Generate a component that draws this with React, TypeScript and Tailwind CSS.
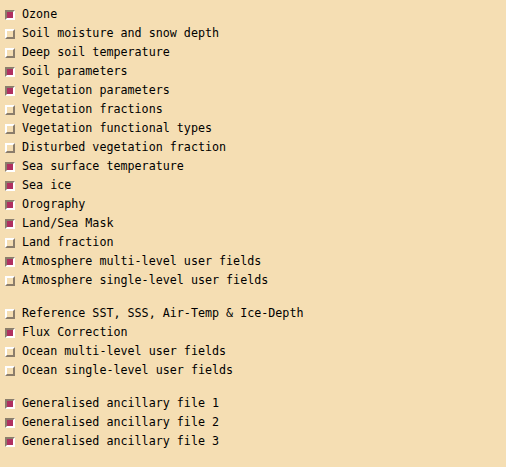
const groups: [string, boolean][][] = [
  [
    ["Ozone", true],
    ["Soil moisture and snow depth", false],
    ["Deep soil temperature", false],
    ["Soil parameters", true],
    ["Vegetation parameters", true],
    ["Vegetation fractions", false],
    ["Vegetation functional types", false],
    ["Disturbed vegetation fraction", false],
    ["Sea surface temperature", true],
    ["Sea ice", true],
    ["Orography", true],
    ["Land/Sea Mask", true],
    ["Land fraction", false],
    ["Atmosphere multi-level user fields", true],
    ["Atmosphere single-level user fields", false],
  ],
  [
    ["Reference SST, SSS, Air-Temp & Ice-Depth", false],
    ["Flux Correction", true],
    ["Ocean multi-level user fields", false],
    ["Ocean single-level user fields", false],
  ],
  [
    ["Generalised ancillary file 1", true],
    ["Generalised ancillary file 2", true],
    ["Generalised ancillary file 3", true],
  ],
];

function Check({ on }: { on: boolean }) {
  return on ? (
    <span className="w-[10px] h-[10px] border-2 border-t-[#8b7d6b] border-l-[#8b7d6b] border-r-white border-b-white bg-[#b03060] shrink-0" />
  ) : (
    <span className="w-[10px] h-[10px] border-2 border-t-white border-l-white border-r-[#8b7d6b] border-b-[#8b7d6b] bg-[#f5deb3] shrink-0" />
  );
}

export default function App() {
  return (
    <div
      className="w-[506px] h-[467px] bg-[#f5deb3] pt-[5px] flex flex-col gap-[14px] text-black"
      style={{ fontFamily: '"DejaVu Sans Mono", "Liberation Mono", monospace' }}
    >
      {groups.map((g, i) => (
        <div key={i} className="flex flex-col">
          {g.map(([label, on]) => (
            <label key={label} className="h-[19px] flex items-center pl-[5px] gap-[7px]">
              <Check on={on} />
              <span className="text-[11.7px] leading-none whitespace-pre">{label}</span>
            </label>
          ))}
        </div>
      ))}
    </div>
  );
}
